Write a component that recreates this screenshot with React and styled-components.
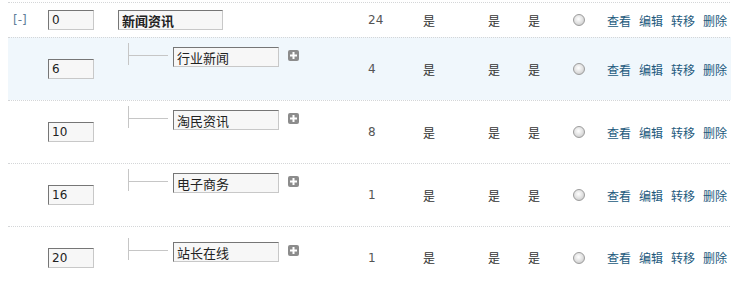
import React from "react";
import styled, { createGlobalStyle } from "styled-components";

const GlobalStyle = createGlobalStyle`
  body {
    margin: 2px 0 0 8px;
    background: #fff;
    overflow: hidden;
    font-family: "DejaVu Sans", "Noto Sans CJK SC", sans-serif;
    font-size: 12px;
    color: #333;
  }
`;

const Table = styled.div`
  width: 760px;
`;

const Row = styled.div`
  display: flex;
  align-items: center;
  height: ${(p) => p.$h}px;
  box-sizing: border-box;
  padding-top: ${(p) => p.$pt || 0}px;
  border-top: 1px dotted #d4d6d8;
  border-bottom: ${(p) => (p.$last ? "2px solid #e4eef6" : "none")};
  background: ${(p) => (p.$hl ? "#f0f7fc" : "#fff")};
`;

const Toggle = styled.div`
  width: 40px;
  padding-left: 5px;
  box-sizing: border-box;
  color: #5f7d99;
  font-size: 12px;
`;

const OrderCell = styled.div`
  width: 70px;
`;

const Field = styled.input`
  box-sizing: border-box;
  width: ${(p) => p.$w}px;
  height: 20px;
  padding: 0 3px;
  margin: 0;
  background: #f7f7f7;
  border: 1px solid #c8c8c8;
  border-top-color: #767676;
  border-left-color: #767676;
  font-family: ${(p) =>
    p.$cjk
      ? '"Noto Sans CJK SC", sans-serif'
      : '"DejaVu Sans", sans-serif'};
  font-size: ${(p) => (p.$cjk ? 13 : 12)}px;
  font-weight: ${(p) => (p.$bold ? 700 : 400)};
  color: #222;
  outline: none;
`;

const NameCell = styled.div`
  width: 250px;
  box-sizing: border-box;
  display: flex;
  align-items: flex-start;
  align-self: ${(p) => (p.$child ? "flex-start" : "center")};
  padding: ${(p) => (p.$child ? "5px 0 0 10px" : "0")};
`;

const Branch = styled.div`
  width: 40px;
  height: 22px;
  border-left: 1px solid #c6c6c6;
  box-sizing: border-box;
`;

const BranchArm = styled.div`
  height: 12px;
  border-bottom: 1px solid #c6c6c6;
`;

const ChildName = styled.div`
  margin: 4px 0 0 5px;
`;

const AddButton = styled.svg`
  margin: 7px 0 0 9px;
  flex: none;
`;

const Cell = styled.div`
  width: ${(p) => p.$w}px;
  color: ${(p) => p.$color || "#333"};
  font-family: ${(p) =>
    p.$cjk
      ? '"Noto Sans CJK SC", sans-serif'
      : '"DejaVu Sans", sans-serif'};
  font-size: 12px;
`;

const RadioCell = styled.div`
  width: 34px;
  display: flex;
  align-items: center;
`;

const Radio = styled.span`
  display: block;
  width: 12px;
  height: 12px;
  box-sizing: border-box;
  border-radius: 50%;
  border: 1px solid #9c9c9c;
  background: radial-gradient(circle at 45% 40%, #ffffff 0%, #e2e2e2 50%, #bdbdbd 100%);
`;

const Actions = styled.div`
  display: flex;
  gap: 8px;
`;

const Action = styled.a`
  color: #22597c;
  font-family: "Noto Sans CJK SC", sans-serif;
  font-size: 12px;
  text-decoration: none;
  cursor: pointer;
`;

const rows = [
  { order: 0, name: "新闻资讯", count: 24, root: true },
  { order: 6, name: "行业新闻", count: 4, hl: true },
  { order: 10, name: "淘民资讯", count: 8 },
  { order: 16, name: "电子商务", count: 1 },
  { order: 20, name: "站长在线", count: 1, last: true },
];

const PlusIcon = () => (
  <AddButton width="11" height="11" viewBox="0 0 11 11">
    <rect x="0" y="0" width="11" height="11" rx="2" fill="#8c8c8c" />
    <rect x="4.5" y="2" width="2" height="7" fill="#fff" />
    <rect x="2" y="4.5" width="7" height="2" fill="#fff" />
  </AddButton>
);

const App = () => {
  return (
    <>
      <GlobalStyle />
      <Table>
        {rows.map((r) => (
          <Row
            key={r.order}
            $h={r.root ? 35 : r.last ? 58 : 63}
            $pt={r.last ? 6 : 0}
            $hl={r.hl}
            $last={r.last}
          >
            <Toggle>{r.root ? "[-]" : ""}</Toggle>
            <OrderCell>
              <Field $w={46} defaultValue={r.order} />
            </OrderCell>
            {r.root ? (
              <NameCell>
                <Field $w={105} $cjk $bold defaultValue={r.name} />
              </NameCell>
            ) : (
              <NameCell $child>
                <Branch>
                  <BranchArm />
                </Branch>
                <ChildName>
                  <Field $w={106} $cjk defaultValue={r.name} />
                </ChildName>
                <PlusIcon />
              </NameCell>
            )}
            <Cell $w={55} $color="#555">
              {r.count}
            </Cell>
            <Cell $w={65} $cjk>
              是
            </Cell>
            <Cell $w={40} $cjk>
              是
            </Cell>
            <Cell $w={45} $cjk>
              是
            </Cell>
            <RadioCell>
              <Radio />
            </RadioCell>
            <Actions>
              <Action>查看</Action>
              <Action>编辑</Action>
              <Action>转移</Action>
              <Action>删除</Action>
            </Actions>
          </Row>
        ))}
      </Table>
    </>
  );
};

export default App;
